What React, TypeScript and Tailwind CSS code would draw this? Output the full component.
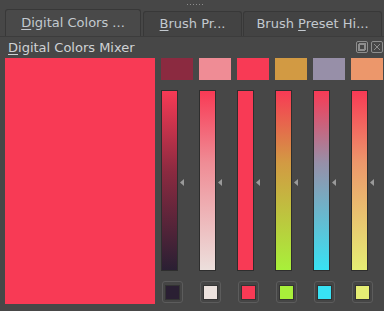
import React from 'react'

const swatches = ['#8b2a40', '#ef8c95', '#f83a55', '#d29a43', '#978fa8', '#ec976b']

const bars = [
  'linear-gradient(to bottom, #f83a55, #8b2a40 45%, #2a1f33)',
  'linear-gradient(to bottom, #f83a55, #ef8c95 40%, #ecdfdc)',
  'linear-gradient(to bottom, #f83a55, #f83a55)',
  'linear-gradient(to bottom, #f83a55, #d29a43 40%, #a8f03a)',
  'linear-gradient(to bottom, #f83a55, #978fa8 40%, #38e2f4)',
  'linear-gradient(to bottom, #f83a55, #ec976b 40%, #e6ee74)',
]

const ends = ['#2a1f33', '#ebe1dd', '#f83a55', '#a8f03a', '#38e2f4', '#e6ee74']

const Mnemonic = ({ ch }: { ch: string }) => <span className="underline underline-offset-2">{ch}</span>

const App: React.FC = () => {
  return (
    <div
      className="w-[384px] h-[311px] overflow-hidden bg-[#474747] text-[13px]"
      style={{ fontFamily: '"DejaVu Sans", sans-serif' }}
    >
      {/* grip dots */}
      <div className="h-[10px] flex items-start pt-[4px] pl-[187px] gap-[2px]">
        {[0, 1, 2, 3, 4, 5].map((i) => (
          <div key={i} className="w-[1px] h-[1px] bg-[#8c8c8c]" />
        ))}
      </div>

      {/* tabs */}
      <div className="h-[27px] flex items-end pl-[5px] border-b border-[#3c3c3c]">
        <div className="w-[136px] h-[27px] flex items-center justify-center bg-[#494949] border border-b-0 border-[#383838] rounded-t-[3px] text-[#c3c9cf]">
          <span>
            <Mnemonic ch="D" />
            igital Colors ...
          </span>
        </div>
        <div className="ml-[2px] w-[99px] h-[25px] flex items-center justify-center bg-[#434343] border border-b-0 border-[#383838] rounded-t-[3px] text-[#c3c9cf]">
          <span>
            <Mnemonic ch="B" />
            rush Pr...
          </span>
        </div>
        <div className="ml-[1px] w-[139px] h-[25px] flex items-center justify-center bg-[#434343] border border-b-0 border-[#383838] rounded-t-[3px] text-[#c3c9cf]">
          <span>
            Brush <Mnemonic ch="P" />
            reset Hi...
          </span>
        </div>
      </div>

      {/* title bar */}
      <div className="h-[20px] flex items-center justify-between pl-[8px] pr-[1px]">
        <span className="text-[#cfd2d5] leading-none">
          <Mnemonic ch="D" />
          igital Colors Mixer
        </span>
        <div className="flex gap-[3px] items-center">
          <svg width="12" height="12" viewBox="0 0 12 12" fill="none" stroke="#8e8e8e" strokeWidth="1">
            <rect x="0.5" y="0.5" width="11" height="11" rx="1.5" />
            <rect x="3.5" y="2.5" width="6" height="6" />
            <rect x="2.5" y="3.5" width="6" height="6" />
          </svg>
          <svg width="12" height="12" viewBox="0 0 12 12" fill="none" stroke="#8e8e8e" strokeWidth="1">
            <rect x="0.5" y="0.5" width="11" height="11" rx="1.5" />
            <path d="M3 3 L9 9 M9 3 L3 9" />
          </svg>
        </div>
      </div>

      {/* mixer */}
      <div className="flex pl-[5px] gap-[6px] pt-[1px]">
        <div className="w-[150px] h-[246px] bg-[#f83a55]" />
        <div className="flex gap-[6px]">
          {swatches.map((c, i) => (
            <div key={i} className="w-[32px] flex flex-col">
              <div className="h-[22px]" style={{ backgroundColor: c }} />
              <div className="mt-[10px] flex items-center">
                <div className="w-[17px] h-[181px] border border-[#2e2e2e]" style={{ background: bars[i] }} />
                <svg className="ml-[2px] mt-[4px]" width="4" height="7" viewBox="0 0 4 7">
                  <polygon points="4,0 0,3.5 4,7" fill="#9a9a9a" />
                </svg>
              </div>
              <div className="mt-[10px] ml-[1px] w-[21px] h-[22px] rounded-[3px] border border-[#5c5c5c] bg-[#454545] flex items-center justify-center">
                <div className="w-[15px] h-[15px] border border-[#333333]" style={{ backgroundColor: ends[i] }} />
              </div>
            </div>
          ))}
        </div>
      </div>
    </div>
  )
}

export default App
